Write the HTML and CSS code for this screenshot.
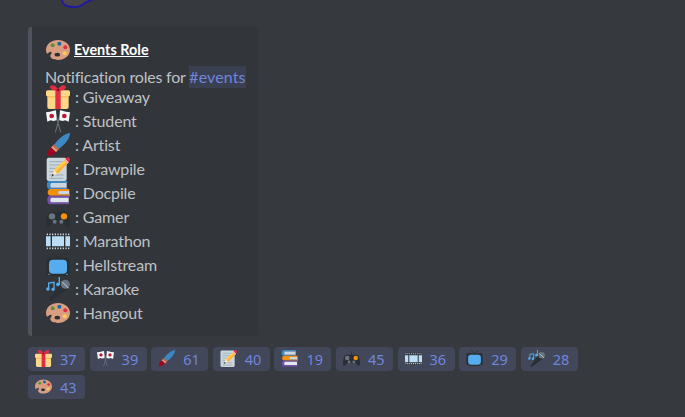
FILE: index.html
```html
<!DOCTYPE html>
<html lang="en">
<head>
<meta charset="utf-8">
<title>Events Role</title>
<link rel="stylesheet" href="styles.css">
</head>
<body>
<svg class="defs" aria-hidden="true">
  <symbol id="palette" viewBox="0 0 36 36"><path fill="#d99e82" d="M18 3C8 3 0 9.500 0 18c0 2 .5 4 1.500 5.500 3-.5 4-4 6.500-2.500 2 1.500-2 4-1.500 6.500C7 31 12 33 18 33c10 0 18-6.500 18-15S28 3 18 3z"/><ellipse cx="17" cy="25" rx="4.200" ry="2.800" fill="#292f33"/><circle cx="10" cy="11" r="3" fill="#5c913b"/><circle cx="20" cy="8.500" r="3" fill="#226699"/><circle cx="29" cy="14" r="3" fill="#dd2e44"/><circle cx="28" cy="23" r="3" fill="#ffcc4d"/></symbol>
  <symbol id="gift" viewBox="0 0 36 36"><path fill="#fdd888" d="M2 15h32v18q0 3-3 3H5q-3 0-3-3z"/><rect x="0" y="8" width="36" height="9" rx="2.500" fill="#fdd888"/><path fill="#fcab40" d="M2 17h32v1.500H2z"/><path fill="#dd2e44" d="M14 8h8v28h-8zM18 8C10 9 6 6 6 3s5-4 8-1l4 4 4-4c3-3 8-2 8 1s-4 6-12 5z"/><path fill="#a0041e" d="M16 6h4v3h-4z"/></symbol>
  <symbol id="flags" viewBox="0 0 36 36"><path stroke="#66757f" stroke-width="1.600" fill="none" d="M13 2l9 33M23 2l-9 33"/><path fill="#f5f8fa" d="M0 5l6-1 4-1 5-1 1 15-5 1-4-1-5 2zM21 2l5 1 4 1 6 1-2 14-5-2-4 1-5-1z"/><circle cx="8.500" cy="10.500" r="3.500" fill="#be1931"/><circle cx="27.500" cy="10.500" r="3.500" fill="#be1931"/></symbol>
  <symbol id="brush" viewBox="0 0 36 36"><path fill="#3b88c3" d="M36 0C29 0 19 8 12 18l7 6C29 17 36 8 36 0z"/><path fill="#c1694f" d="M12 17l8 7-5 5-8-7z"/><path fill="#d99e82" d="M10 20l7 6-2 2-7-6z"/><path fill="#a0041e" d="M8 22l6 6c-2 5-8 7-13 6 2-2 1-3 2-6 1-4 3-5 5-6z"/></symbol>
  <symbol id="memo" viewBox="0 0 36 36"><rect x="1" y="1" width="30" height="35" rx="3" fill="#ccd6dd"/><path stroke="#99aab5" stroke-width="1.500" d="M5 7h20M5 12h17M5 17h13M5 22h8M5 27h21M5 32h21"/><path fill="#ffcc4d" d="M12 19L29 3l5 5-17 17z"/><path fill="#ffac33" d="M15 22L32 6l2 2-17 17z"/><path fill="#dd2e44" d="M29 3l2-2q2-2 4 0 2 3 0 5l-2 2z"/><path fill="#f4abba" d="M27 5l2-2 5 5-2 2z"/><path fill="#ffe8b6" d="M12 19l5 6-8 4z"/><path fill="#292f33" d="M10 25l2 2-4 3z"/></symbol>
  <symbol id="books" viewBox="0 0 36 36"><path fill="#3b88c3" d="M32 0H5C0 0 0 12 5 12h27v-2H9V3h23z"/><path fill="#ccd6dd" d="M8 3h23v7H8q-3-3 0-7z"/><path fill="#f4900c" d="M35 12H7c-6 0-6 10 0 10h29v-2H19v-5h16z"/><path fill="#ccd6dd" d="M19 15h16v5H19q-2-3 0-5z"/><path fill="#7450a8" d="M34 22H6c-6 0-5 13 0 13h29v-3H9v-7h26v-3z"/><path fill="#e1e8ed" d="M8 25h26v7H8q-3-3 0-7z"/></symbol>
  <symbol id="gamepad" viewBox="0 0 36 36"><path fill="none" stroke="#292f33" stroke-width="1.500" d="M18 12V6q0-2-2-4"/><path fill="#292f33" d="M8 10h20c5 0 8 9 8 19 0 6-5 6-9-2H9C5 35 0 35 0 29c0-10 3-19 8-19z"/><circle cx="9" cy="17" r="4.800" fill="#66757f"/><circle cx="27" cy="17" r="4.800" fill="#f4900c"/><circle cx="13" cy="25" r="3" fill="#66757f"/><circle cx="23" cy="25" r="3" fill="#66757f"/></symbol>
  <symbol id="film" viewBox="0 0 36 36"><path fill="#292f33" d="M0 6h36v25H0z"/><path fill="#bbddf5" d="M0 11h7v15H0zM9 11h18v15H9zM29 11h7v15h-7z"/><path stroke="#ccd6dd" stroke-width="2.500" stroke-dasharray="2 2" d="M1 8h35M1 29h35"/></symbol>
  <symbol id="tv" viewBox="0 0 36 36"><path fill="none" stroke="#292f33" stroke-width="1.500" d="M10 0l8 8 8-8"/><rect x="1" y="7" width="34" height="27" rx="3" fill="#292f33"/><rect x="4.500" y="10" width="27" height="21" rx="6" fill="#55acee"/><path fill="#66757f" d="M3 31h3v2H3zM30 31h3v2h-3z"/></symbol>
  <symbol id="mic" viewBox="0 0 36 36"><path fill="#292f33" d="M22 10l9 9-17 12-7 5-2-2 6-8z"/><circle cx="29" cy="11" r="6.800" fill="#66757f"/><path stroke="#ccd6dd" stroke-width="1.500" d="M24 7l10 10"/><path fill="none" stroke="#55acee" stroke-width="2" d="M4 18V9l8-1v10M20 11V0"/><g fill="#55acee"><circle cx="2.800" cy="18" r="2.500"/><circle cx="10.500" cy="18.500" r="2.500"/><circle cx="18" cy="11" r="2.800"/></g></symbol>
</svg>
<svg class="scribble" viewBox="0 0 50 10"><path d="M11.500-2C12 5 16 7 25 7S33 2.500 38 1.500l6-3"/></svg>
<main class="message">
  <article class="embed">
    <h1 class="title"><svg><use href="#palette"/></svg><span>Events Role</span></h1>
    <p class="intro">Notification roles for <a class="channel">#events</a></p>
    <ul class="roles">
      <li><svg><use href="#gift"/></svg><span>: Giveaway</span></li>
      <li><svg><use href="#flags"/></svg><span>: Student</span></li>
      <li><svg><use href="#brush"/></svg><span>: Artist</span></li>
      <li><svg><use href="#memo"/></svg><span>: Drawpile</span></li>
      <li><svg><use href="#books"/></svg><span>: Docpile</span></li>
      <li><svg><use href="#gamepad"/></svg><span>: Gamer</span></li>
      <li><svg><use href="#film"/></svg><span>: Marathon</span></li>
      <li><svg><use href="#tv"/></svg><span>: Hellstream</span></li>
      <li><svg><use href="#mic"/></svg><span>: Karaoke</span></li>
      <li><svg><use href="#palette"/></svg><span>: Hangout</span></li>
    </ul>
  </article>
  <div class="reactions">
    <div class="chip"><svg><use href="#gift"/></svg>37</div>
    <div class="chip"><svg><use href="#flags"/></svg>39</div>
    <div class="chip"><svg><use href="#brush"/></svg>61</div>
    <div class="chip"><svg><use href="#memo"/></svg>40</div>
    <div class="chip"><svg><use href="#books"/></svg>19</div>
    <div class="chip"><svg><use href="#gamepad"/></svg>45</div>
    <div class="chip"><svg><use href="#film"/></svg>36</div>
    <div class="chip"><svg><use href="#tv"/></svg>29</div>
    <div class="chip"><svg><use href="#mic"/></svg>28</div>
    <div class="chip"><svg><use href="#palette"/></svg>43</div>
  </div>
</main>
</body>
</html>
```
FILE: styles.css
```css
* { box-sizing: border-box; }
body { margin: 0; height: 417px; overflow: hidden; background: #36393e; color: #bfc1c4; font-family: Lato, "Noto Sans", sans-serif; font-size: 16px; }
.defs { position: absolute; width: 0; height: 0; }
.scribble { position: absolute; left: 50px; top: 0; width: 50px; height: 10px; fill: #4b4646; stroke: #211b9c; stroke-width: 2; }
.message { padding: 27px 0 0 28px; }
.embed { width: 230px; height: 309px; padding: 11px 8px 0 13px; background: #32353a; border-left: 4px solid #4f545c; border-radius: 4px; }
.title { display: flex; align-items: center; gap: 4px; height: 24px; margin: 0; color: #fff; font-size: 14.400px; line-height: 22px; font-weight: 700; text-decoration: underline; }
.title svg, .roles svg { width: 24px; height: 24px; margin-left: 1px; flex: none; }
.intro { margin: 4px 0 0; height: 19px; line-height: 22px; white-space: nowrap; letter-spacing: -.2px; }
.channel { display: inline-block; color: #6f86dd; background: #3a4052; letter-spacing: .1px; }
.roles { margin: 0; padding: 0; list-style: none; letter-spacing: -.15px; }
.roles li { display: flex; align-items: center; gap: 5px; height: 24px; line-height: 24px; }
.reactions { display: flex; flex-wrap: wrap; gap: 4px 4.600px; width: 554px; margin-top: 11px; }
.chip { display: flex; align-items: center; width: 57px; height: 24px; padding: 0 0 1px 7px; border-radius: 4px; background: #42475a; color: #6f86dd; font: 14.500px/22px "Noto Sans", sans-serif; }
.chip svg { width: 17px; height: 17px; margin-right: 8px; flex: none; }
```
